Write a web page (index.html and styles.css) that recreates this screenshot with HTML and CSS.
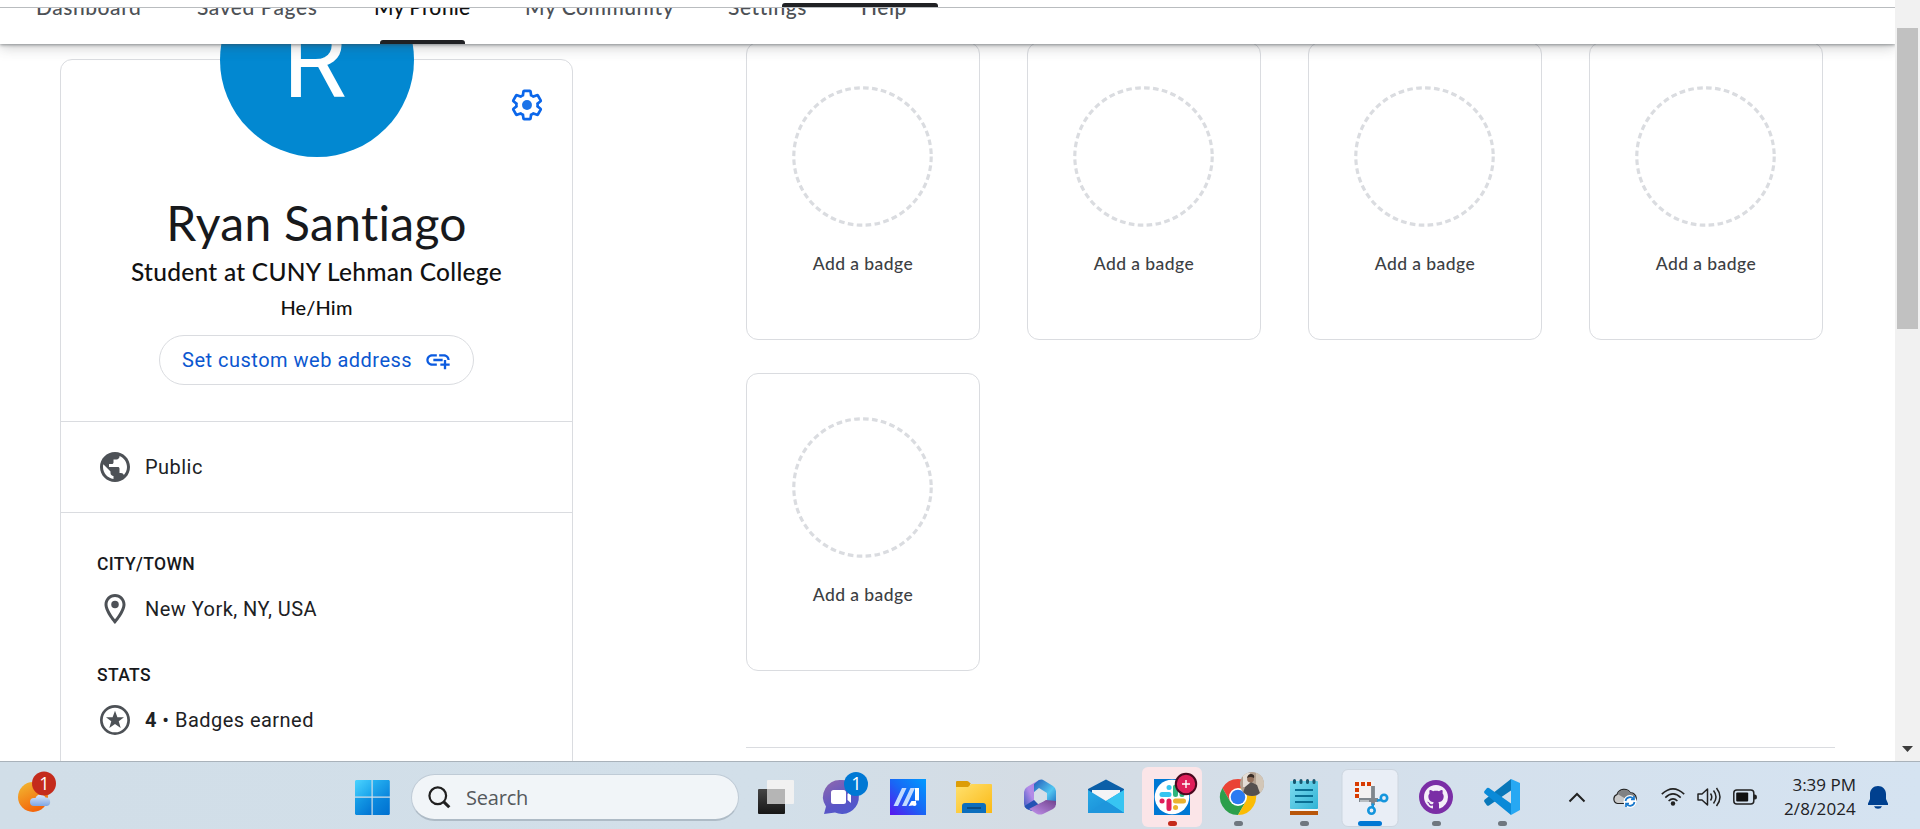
FILE: index.html
```html
<!DOCTYPE html>
<html lang="en">
<head>
<meta charset="utf-8">
<title>My Profile</title>
<link rel="stylesheet" href="styles.css">
</head>
<body>
<div class="screen">
  <div class="browser">
    <div class="page">
      <header class="header">
        <div class="topline"><span class="topmark"></span></div>
        <nav class="tabs">
          <a class="tab">Dashboard</a>
          <a class="tab">Saved Pages</a>
          <a class="tab active">My Profile</a>
          <a class="tab">My Community</a>
          <a class="tab">Settings</a>
          <a class="tab">Help</a>
        </nav>
      </header>
      <main class="main">
        <section class="profile">
          <div class="identity">
            <div class="avatar"><span>R</span></div>
            <svg class="gear" viewBox="0 0 24 24"><path fill="none" stroke="#0b66ea" stroke-width="1.9" d="M19.43 12.98c.04-.32.07-.64.07-.98 0-.34-.03-.66-.07-.98l2.11-1.65c.19-.15.24-.42.12-.64l-2-3.46c-.09-.16-.26-.25-.44-.25-.06 0-.12.01-.17.03l-2.49 1c-.52-.4-1.08-.73-1.69-.98l-.38-2.65C14.46 2.18 14.25 2 14 2h-4c-.25 0-.46.18-.49.42l-.38 2.65c-.61.25-1.17.59-1.69.98l-2.49-1c-.06-.02-.12-.03-.18-.03-.17 0-.34.09-.43.25l-2 3.46c-.13.22-.07.49.12.64l2.11 1.65c-.04.32-.07.65-.07.98 0 .33.03.66.07.98l-2.11 1.65c-.19.15-.24.42-.12.64l2 3.46c.09.16.26.25.44.25.06 0 .12-.01.17-.03l2.49-1c.52.4 1.08.73 1.69.98l.38 2.65c.03.24.24.42.49.42h4c.25 0 .46-.18.49-.42l.38-2.65c.61-.25 1.17-.59 1.69-.98l2.49 1c.06.02.12.03.18.03.17 0 .34-.09.43-.25l2-3.46c.12-.22.07-.49-.12-.64l-2.11-1.65z"/><circle cx="12" cy="12" r="3.5" fill="#1a73e8"/></svg>
            <h1 class="name">Ryan Santiago</h1>
            <p class="role">Student at CUNY Lehman College</p>
            <p class="pronouns">He/Him</p>
            <button class="address"><span>Set custom web address</span>
              <svg class="link" viewBox="0 0 24 24"><path fill="#0b5be0" d="M8 11h8v2H8zM20.1 12H22c0-2.76-2.24-5-5-5h-4v1.9h4c1.71 0 3.1 1.39 3.1 3.1zM3.9 12c0-1.71 1.39-3.1 3.1-3.1h4V7H7c-2.76 0-5 2.24-5 5s2.24 5 5 5h4v-1.9H7c-1.71 0-3.1-1.39-3.1-3.1zM19 12h-2v3h-3v2h3v3h2v-3h3v-2h-3z"/></svg>
            </button>
          </div>
          <div class="visibility row">
            <svg class="icon" viewBox="0 0 24 24"><path d="M12 2C6.48 2 2 6.48 2 12s4.48 10 10 10 10-4.48 10-10S17.52 2 12 2zm-1 17.93c-3.95-.49-7-3.85-7-7.93 0-.62.08-1.21.21-1.79L9 15v1c0 1.1.9 2 2 2v1.93zm6.9-2.54c-.26-.81-1-1.39-1.9-1.39h-1v-3c0-.55-.45-1-1-1H8v-2h2c.55 0 1-.45 1-1V7h2c1.1 0 2-.9 2-2v-.41c2.93 1.19 5 4.06 5 7.41 0 2.08-.8 3.97-2.1 5.39z"/></svg>
            <span>Public</span>
          </div>
          <div class="details">
            <h2 class="label">CITY/TOWN</h2>
            <div class="row">
              <svg class="icon" viewBox="0 0 24 24"><path d="M12 2C8.13 2 5 5.13 5 9c0 5.25 7 13 7 13s7-7.75 7-13c0-3.87-3.13-7-7-7zM7 9c0-2.76 2.24-5 5-5s5 2.24 5 5c0 2.88-2.88 7.19-5 9.88C9.92 16.21 7 11.85 7 9z"/><circle cx="12" cy="9" r="2.5"/></svg>
              <span>New York, NY, USA</span>
            </div>
            <h2 class="label stats">STATS</h2>
            <div class="row">
              <svg class="icon" viewBox="0 0 24 24"><circle cx="12" cy="12" r="9.1" fill="none" stroke="#4d5156" stroke-width="1.8"/><path d="M12 5.900l1.600 4.250h4.400l-3.500 2.750 1.300 4.400L12 14.700 8.200 17.300l1.300-4.400L6 10.150h4.400z"/></svg>
              <span><b>4</b> • Badges earned</span>
            </div>
          </div>
        </section>
        <section class="badges">
          <div class="grid">
            <div class="badge"><svg class="ring" viewBox="0 0 142 142"><circle cx="71" cy="71" r="69.200"/></svg><span>Add a badge</span></div>
            <div class="badge"><svg class="ring" viewBox="0 0 142 142"><circle cx="71" cy="71" r="69.200"/></svg><span>Add a badge</span></div>
            <div class="badge"><svg class="ring" viewBox="0 0 142 142"><circle cx="71" cy="71" r="69.200"/></svg><span>Add a badge</span></div>
            <div class="badge"><svg class="ring" viewBox="0 0 142 142"><circle cx="71" cy="71" r="69.200"/></svg><span>Add a badge</span></div>
            <div class="badge"><svg class="ring" viewBox="0 0 142 142"><circle cx="71" cy="71" r="69.200"/></svg><span>Add a badge</span></div>
          </div>
          <hr class="rule">
        </section>
      </main>
    </div>
    <div class="scrollbar"><div class="thumb"></div><svg class="down" viewBox="0 0 11 6"><path d="M0 0h11L5.5 6z" fill="#3c3c3c"/></svg></div>
  </div>

  <footer class="taskbar">
    <svg class="slot weather" viewBox="0 0 60 60">
      <defs>
        <linearGradient id="sun" x1="0" y1="0" x2=".5" y2="1"><stop offset="0" stop-color="#f1bc34"/><stop offset="1" stop-color="#f4650a"/></linearGradient>
        <linearGradient id="cloud" x1="0" y1="0" x2="0" y2="1"><stop offset="0" stop-color="#dbe9fb"/><stop offset="1" stop-color="#7fa6e4"/></linearGradient>
      </defs>
      <circle cx="33" cy="30" r="15" fill="url(#sun)"/>
      <path d="M34 39a4 4 0 0 1 0-8h1.500a5.500 5.500 0 0 1 10-.5 4.300 4.300 0 0 1 1.200 8.500z" fill="url(#cloud)"/>
      <circle cx="44" cy="16.500" r="12" fill="#c42b1c"/>
      <text x="44.500" y="22.500" class="count">1</text>
    </svg>
    <svg class="slot start" viewBox="0 0 60 60">
      <defs>
        <linearGradient id="w1" x1="0" y1="0" x2="1" y2="1"><stop offset="0" stop-color="#4cd3ff"/><stop offset="1" stop-color="#16a1ea"/></linearGradient>
        <linearGradient id="w2" x1="0" y1="0" x2="1" y2="1"><stop offset="0" stop-color="#27b4f2"/><stop offset="1" stop-color="#0a84dc"/></linearGradient>
        <linearGradient id="w3" x1="0" y1="0" x2="1" y2="1"><stop offset="0" stop-color="#18a3ea"/><stop offset="1" stop-color="#0173d2"/></linearGradient>
        <linearGradient id="w4" x1="0" y1="0" x2="1" y2="1"><stop offset="0" stop-color="#0d8de0"/><stop offset="1" stop-color="#0070d0"/></linearGradient>
      </defs>
      <path d="M14 13h15.500v16.500H13V14z" fill="url(#w1)"/><path d="M30.700 13H47l.800 1v15.500H30.700z" fill="url(#w2)"/><path d="M13 30.700h16.500V48H14l-1-1z" fill="url(#w3)"/><path d="M30.700 30.700h17.100V47l-.8 1H30.700z" fill="url(#w4)"/>
    </svg>
    <div class="search">
      <svg class="lens" viewBox="0 0 24 24"><circle cx="10.200" cy="10.200" r="8.700"/><path d="M16.500 16.500l5.700 5.700" stroke-width="3.200"/></svg>
      <span>Search</span>
    </div>
    <div class="apps">
      <svg class="slot" viewBox="0 0 60 60">
        <defs><linearGradient id="tv" x1="0" y1="0" x2="0" y2="1"><stop offset="0" stop-color="#454545"/><stop offset="1" stop-color="#161616"/></linearGradient></defs>
        <rect x="12" y="22" width="27" height="25" rx="1" fill="url(#tv)"/>
        <rect x="21" y="13" width="27" height="24" rx="1" fill="#f1f1f1"/><rect x="21" y="22" width="18" height="15" fill="#b5b5b5"/>
      </svg>
      <svg class="slot" viewBox="0 0 60 60">
        <defs><linearGradient id="chat" x1="0" y1="0" x2=".6" y2="1"><stop offset="0" stop-color="#9169ad"/><stop offset=".7" stop-color="#5a55c6"/><stop offset="1" stop-color="#5058cc"/></linearGradient></defs>
        <path d="M29 13a17 17 0 1 1-6 32.500L12 47l2-7.500A17 17 0 0 1 29 13z" fill="url(#chat)"/>
        <rect x="19" y="23" width="15" height="14" rx="2.500" fill="#fff"/><path d="M35.500 27l3.500-3v12l-3.500-3z" fill="#fff"/>
        <circle cx="44" cy="17" r="12" fill="#0078d4"/><text x="44.500" y="23" class="count">1</text>
      </svg>
      <svg class="slot" viewBox="0 0 60 60">
        <defs><linearGradient id="asus" x1="1" y1="0" x2="0" y2="1"><stop offset="0" stop-color="#009bff"/><stop offset=".5" stop-color="#1867f5"/><stop offset="1" stop-color="#5a14ee"/></linearGradient></defs>
        <rect x="12" y="12" width="36" height="36" fill="url(#asus)"/>
        <path d="M15.500 39L24 21h4.500L20 39zM24 39l8.500-18H37L28.500 39z" fill="#c3dbff"/><path d="M37 21h4v12.500h-4zM30.500 39l3-5H38v4z" fill="#fff"/><circle cx="36.500" cy="37" r="2" fill="#fff"/>
      </svg>
      <svg class="slot" viewBox="0 0 60 60">
        <defs><linearGradient id="fold" x1="0" y1="0" x2="1" y2="1"><stop offset="0" stop-color="#ffe16f"/><stop offset="1" stop-color="#fbb915"/></linearGradient></defs>
        <path d="M12 15q0-1 1-1h10q1 0 2 1l2 2h-1v5H12z" fill="#dd9d07"/>
        <path d="M12 20h12l3-3h20q1 0 1 1v28H12z" fill="url(#fold)"/>
        <path d="M18 46v-7q0-3 3-3h18q3 0 3 3v7z" fill="#0c6ebd"/><path d="M23 41h14" stroke="#0a4c84" stroke-width="2"/>
      </svg>
      <svg class="slot" viewBox="0 0 60 60">
        <defs>
          <linearGradient id="m1" x1="1" y1="0" x2="0" y2="1"><stop offset="0" stop-color="#b583e0"/><stop offset=".5" stop-color="#b28be8"/><stop offset="1" stop-color="#3456bd"/></linearGradient>
          <linearGradient id="m2" x1="0" y1="0" x2="1" y2="1"><stop offset="0" stop-color="#235ab8"/><stop offset=".6" stop-color="#52c6f1"/><stop offset="1" stop-color="#1f6cc0"/></linearGradient>
          <linearGradient id="m3" x1="0" y1="1" x2="1" y2="0"><stop offset="0" stop-color="#c495f0"/><stop offset="1" stop-color="#70418c"/></linearGradient>
        </defs>
        <path d="M29 13L17 20q-3 2-3 5v12q0 3 3 5l5 2 7-4-5-7v-8l5-6z" fill="url(#m1)"/>
        <path d="M17 42q-1.500-1-2.500-3L24 33l5 5-7 6z" fill="#2452b4"/>
        <path d="M29 13q3-1 5 .500l9 5.500q3 2 3 5v14l-9-4v-8l-8-5-5 4v-8z" fill="url(#m2)"/>
        <path d="M46 34v3q0 3-3 5l-10 5q-3 1-6 0l-8-5 17-9z" fill="url(#m3)"/>
        <circle cx="30" cy="29.500" r="6" fill="#d5dee8"/>
      </svg>
      <svg class="slot" viewBox="0 0 60 60">
        <defs><linearGradient id="mail" x1="0" y1="0" x2="1" y2="1"><stop offset="0" stop-color="#28a9e5"/><stop offset="1" stop-color="#1487d5"/></linearGradient></defs>
        <path d="M12 22l18-9.500L48 22v4H12z" fill="#0b5fa8"/><path d="M16 23h28v10L30 40 16 33z" fill="#f4f4f6"/>
        <path d="M12 23l18 11 18-11v23H12z" fill="url(#mail)"/><path d="M48 23v23L30 34z" fill="#37c5f2"/><path d="M12 46l18-12 18 12z" fill="#1e96dc"/>
      </svg>
      <svg class="slot" viewBox="0 0 60 60">
        <rect width="60" height="60" rx="6" fill="#fbe5e8"/>
        <rect x="12" y="12" width="36" height="36" fill="#0078d4"/><circle cx="30" cy="30" r="17.300" fill="#fff"/>
        <g stroke-width="5" stroke-linecap="round" fill="none">
          <path d="M20 27.500h7M27 20.500h.1" stroke="#36c5f0"/><path d="M33.500 20v7.500M40 27.500h.1" stroke="#2eb67d"/>
          <path d="M33.500 34h8M33.500 40.500h.1" stroke="#ecb22e"/><path d="M27 34v7.500M20 34h.1" stroke="#e01e5a"/>
        </g>
        <circle cx="44" cy="17" r="10.200" fill="#e01e5a" stroke="#49091f" stroke-width="2"/><path d="M40 17h8M44 13v8" stroke="#fff" stroke-width="1.400"/>
        <rect x="26" y="54" width="9" height="5" rx="2.500" fill="#c42b1c"/>
      </svg>
      <svg class="slot" viewBox="0 0 60 60">
        <path d="M14.400 21A18 18 0 0 1 45.600 21H30l-7.800 13.500z" fill="#ea4335"/>
        <path d="M14.400 21A18 18 0 0 0 30 48l7.800-13.500H22.200z" fill="#2b9f4b"/><path d="M45.600 21A18 18 0 0 1 30 48l7.800-13.500L30 21z" fill="#fbbc04"/>
        <circle cx="30" cy="30" r="9" fill="#fff"/><circle cx="30" cy="30" r="7.300" fill="#2b7bf2"/>
        <clipPath id="face"><circle cx="44" cy="17" r="12"/></clipPath>
        <g clip-path="url(#face)"><path d="M32 5h24v24H32z" fill="#b3a190"/><path d="M48 5h8v24h-8z" fill="#d2c6b7"/><path d="M35 6h7v14h-7z" fill="#e4ddd5"/><path d="M34 29l3-9 6-5 6 3 4 11z" fill="#55504e"/><circle cx="42.500" cy="12" r="3.400" fill="#94705a"/><path d="M39 11q1-4.500 4.500-4 3.500 .5 2.500 4-3.500-2-7 0z" fill="#382c26"/></g>
        <rect x="26" y="54" width="9" height="5" rx="2.500" fill="#6f777f"/>
      </svg>
      <svg class="slot" viewBox="0 0 60 60">
        <defs><linearGradient id="note" x1="0" y1="0" x2="1" y2="1"><stop offset="0" stop-color="#7fdcf0"/><stop offset="1" stop-color="#30b3d5"/></linearGradient></defs>
        <path d="M16 42h28v3H16z" fill="#f5f5f5"/><path d="M16 44h28v4H16z" fill="#b8560a"/><rect x="16" y="14" width="28" height="28" rx="1" fill="url(#note)"/>
        <path d="M21 23h18M21 29h18M21 35h18" stroke="#0a6f93" stroke-width="2"/><path d="M20.500 13.500v2M27 13.500v2M33.500 13.500v2M40 13.500v2" stroke="#17576f" stroke-width="3" stroke-linecap="round"/>
        <rect x="26" y="54" width="9" height="5" rx="2.500" fill="#6f777f"/>
      </svg>
      <svg class="slot" viewBox="0 0 60 60">
        <rect x="2" y="2.500" width="56" height="57" rx="6" fill="#e9eef6" stroke="#ccd5df"/><rect x="15" y="14" width="19" height="17" fill="#f3f1f2"/>
        <path d="M15 17h16M17 21v12" stroke="#d83b01" stroke-width="4" stroke-dasharray="4 2"/>
        <path d="M33 19v19M19 33h19" stroke="#7f868d" stroke-width="3.800"/><path d="M20 34h9" stroke="#b7bdc2" stroke-width="2"/>
        <g fill="none" stroke="#1495dd" stroke-width="2.600"><circle cx="44" cy="31" r="3.200"/><circle cx="31.500" cy="43.500" r="3.200"/><path d="M37 33.500l4.500-.5M33 36.500l-.5 4"/></g>
        <rect x="18" y="54" width="24" height="5" rx="2.500" fill="#0078d4"/>
      </svg>
      <svg class="slot" viewBox="0 0 60 60">
        <circle cx="30" cy="30" r="17" fill="#7b2ea6"/>
        <path transform="translate(18 18) scale(1.5)" fill="#f4eff8" d="M8 0C3.580 0 0 3.580 0 8c0 3.540 2.290 6.530 5.470 7.590.4.070.55-.17.55-.38 0-.19-.01-.82-.01-1.490-2.010.37-2.530-.49-2.690-.94-.09-.23-.48-.94-.82-1.130-.28-.15-.68-.52-.01-.53.63-.01 1.080.58 1.230.82.72 1.210 1.870.87 2.330.66.07-.52.28-.87.51-1.070-1.780-.2-3.640-.89-3.640-3.950 0-.87.31-1.590.82-2.150-.08-.2-.36-1.020.08-2.120 0 0 .67-.21 2.200.82.64-.18 1.320-.27 2-.27s1.360.09 2 .27c1.530-1.040 2.200-.82 2.200-.82.44 1.100.16 1.920.08 2.120.51.56.82 1.270.82 2.150 0 3.070-1.870 3.750-3.650 3.950.29.25.54.73.54 1.480 0 1.070-.01 1.930-.01 2.200 0 .21.15.46.55.38A8.010 8.010 0 0 0 16 8c0-4.420-3.580-8-8-8z"/>
        <rect x="26" y="54" width="9" height="5" rx="2.500" fill="#6f777f"/>
      </svg>
      <svg class="slot" viewBox="0 0 60 60">
        <path d="M12.500 35q-1-1 0-2.300L39 12v11.500L17 38.500q-1 .7-2 0z" fill="#0877b9"/>
        <path d="M12.500 24q-1 1 0 2.300L39 48V36.500L17 21q-1-.7-2 0z" fill="#0a8ad8"/>
        <path d="M39 12l9 4v27l-9 5z" fill="#27a8f3"/>
        <rect x="26" y="54" width="9" height="5" rx="2.500" fill="#6f777f"/>
      </svg>
    </div>
    <div class="tray">
      <svg class="chevron" viewBox="0 0 18 11"><path d="M1.500 9.500L9 2l7.500 7.500" fill="none" stroke="#222" stroke-width="2"/></svg>
      <svg class="cloudsync" viewBox="0 0 25 21"><path d="M5.500 16.500a4.700 4.700 0 0 1-.5-9A7.500 7.500 0 0 1 18.500 6a5 5 0 0 1 1 10.500z" fill="#c9c9c9" stroke="#222" stroke-width="1.200"/><path d="M5.500 7A7.500 7.500 0 0 1 18.500 6a5 5 0 0 1 4.500 4.500L14 12z" fill="#808284"/><circle cx="18" cy="14.500" r="6.500" fill="#fff"/><g fill="none" stroke="#1878cc" stroke-width="1.700"><path d="M13.500 14a4.500 4.500 0 0 1 8-2M22.500 15a4.500 4.500 0 0 1-8 2"/><path d="M22 9v3.300h-3M14 20v-3.300h3"/></g></svg>
      <svg class="wifi" viewBox="0 0 24 18"><g fill="none" stroke="#222" stroke-width="1.600"><path d="M.8 6.200Q12-4.400 23.200 6.200M4.300 9.600q7.700-7.300 15.400 0M7.600 13q4.400-4.300 8.800 0"/></g><circle cx="12" cy="15.500" r="2.200" fill="#222"/></svg>
      <svg class="speaker" viewBox="0 0 24 20"><g fill="none" stroke="#222" stroke-width="1.500"><path d="M1 7h4l5.500-5v16L5 13H1z" stroke-linejoin="round"/><path d="M13.500 6.500q2.500 3.500 0 7M16.500 3.500q5 6.500 0 13M19.500 1q7 9 0 18"/></g></svg>
      <svg class="battery" viewBox="0 0 24 16"><rect x=".8" y="1" width="20" height="14" rx="3" fill="none" stroke="#222" stroke-width="1.500"/><rect x="3.200" y="3.600" width="12" height="8.800" rx="1" fill="#111"/><path d="M21 5.500h1q2 0 2 2.500t-2 2.500h-1z" fill="#222"/></svg>
      <div class="clock"><span class="time">3:39 PM</span><span class="date">2/8/2024</span></div>
      <svg class="bell" viewBox="0 0 20 23"><path d="M10 0c4.500 0 8 3.500 8 8v5l2 4.500V19H0v-1.500L2 13V8c0-4.500 3.500-8 8-8zM6 20.200h8q-1 2.600-4 2.600t-4-2.600z" fill="#00408f"/></svg>
    </div>
  </footer>
</div>
</body>
</html>
```

FILE: styles.css
```css
* { box-sizing: border-box; }
body { margin: 0; background: #fff; font-family: Roboto, "Liberation Sans", sans-serif; color: #202124; font-variant-ligatures: none; }
h1, h2, p { margin: 0; font-weight: 400; }
svg { display: block; flex: none; }

.screen { width: 1920px; height: 829px; display: flex; flex-direction: column; overflow: hidden; }
.browser { height: 761px; display: flex; }
.page { width: 1895px; height: 761px; overflow: hidden; display: flex; flex-direction: column; }

.header { position: relative; z-index: 2; height: 44px; flex: none; background: #fff; box-shadow: 0 1px 3px rgba(60,64,67,.5), 0 3px 14px rgba(60,64,67,.28); }
.topline { height: 8px; border-bottom: 1px solid #b9bcbf; padding: 3px 0 0 782px; }
.topmark { display: block; width: 156px; height: 4px; background: #202124; border-radius: 3px 3px 0 0; }
.tabs { height: 36px; overflow: hidden; padding-left: 36px; display: grid; grid-template-columns: 161px 177px 151px 203px 133px auto; }
.tab { position: relative; height: 49px; margin-top: -13px; font: 500 21px/24px Lato, sans-serif; letter-spacing: .55px; font-variant-ligatures: none; color: #4d5156; white-space: nowrap; }
.active { color: #111; letter-spacing: .1px; }
.active::after { content: ""; position: absolute; left: 6px; top: 45px; width: 85px; height: 4px; border-radius: 3px 3px 0 0; background: #202124; }

.main { flex: 1; overflow: hidden; display: flex; align-items: flex-start; padding-left: 60px; }
.profile { width: 513px; height: 740px; margin-top: 15px; border: 1px solid #dadce0; border-radius: 12px; flex: none; }
.identity { position: relative; height: 362px; display: flex; flex-direction: column; align-items: center; border-bottom: 1px solid #dadce0; }
.avatar { width: 194px; height: 194px; margin-top: -97px; flex: none; border-radius: 50%; background: #0288d1; color: #fff; text-align: center; font-size: 104px; line-height: 194px; }
.avatar span { display: block; padding-top: 2px; margin-left: -4px; }
.gear { position: absolute; right: 28px; top: 28px; width: 34px; height: 34px; }
.name { margin-top: 38px; font: 400 48px/56px Lato, sans-serif; font-variant-ligatures: none; letter-spacing: .3px; color: #17191c; white-space: nowrap; }
.role { margin-top: 5px; font: 500 24.5px/32px Lato, sans-serif; font-variant-ligatures: none; letter-spacing: .27px; color: #111; white-space: nowrap; }
.pronouns { margin-top: 5px; font: 500 20px/28px Lato, sans-serif; letter-spacing: .15px; color: #111; }
.address { margin-top: 14px; width: 315px; height: 50px; border: 1px solid #dadce0; border-radius: 25px; background: #fff; color: #0b57d0; font: 400 20px/48px Roboto, sans-serif; letter-spacing: .5px; display: flex; align-items: center; padding: 0 0 0 22px; white-space: nowrap; flex: none; }
.address span { width: 232px; text-align: left; }
.link { width: 28px; height: 28px; margin-left: 10px; }
.icon { width: 36px; height: 36px; fill: #4d5156; }
.row { display: flex; align-items: center; gap: 12px; height: 36px; font-size: 20px; letter-spacing: .46px; white-space: nowrap; }
.visibility { height: 91px; padding-left: 36px; border-bottom: 1px solid #dadce0; }
.details { padding: 38px 0 0 36px; }
.label { font-size: 17.5px; line-height: 26px; font-weight: 500; letter-spacing: .35px; color: #17191c; }
.details .row { margin-top: 14px; }
.stats { margin-top: 35px; }

.badges { margin-left: 173px; width: 1089px; }
.grid { margin-top: -2px; display: grid; grid-template-columns: repeat(4, 234px); column-gap: 47px; row-gap: 33px; }
.badge { height: 298px; border: 1px solid #dadce0; border-radius: 12px; display: flex; flex-direction: column; align-items: center; padding-top: 43px; font: 500 17.5px/24px Lato, sans-serif; letter-spacing: .42px; color: #3c4043; }
.badge span { margin-top: 25px; }
.ring { width: 141px; height: 141px; margin-right: 1px; }
.ring circle { fill: none; stroke: #dadce0; stroke-width: 3.2; stroke-dasharray: 5.7 3.36; }
.rule { height: 1px; border: 0; background: #dadce0; margin: 76px 0 0; }

.scrollbar { width: 25px; background: #f1f1f1; padding: 28px 2px 0; }
.thumb { height: 301px; width: 21px; background: #c1c1c1; }
.down { width: 11px; height: 6px; margin: 417px 0 0 5px; }

.taskbar { height: 68px; border-top: 1px solid #a9b2ba; background: linear-gradient(90deg, #d1dee8 0%, #d2dfe9 40%, #d4dce4 54%, #d4e0ec 75%, #d5e3f1 100%); display: flex; align-items: flex-start; padding-top: 5px; font-family: "Open Sans", "Noto Sans", sans-serif; }
.slot { width: 60px; height: 60px; }
.start { margin-left: 282px; }
.search { width: 328px; height: 47px; margin: 7px 0 0 9px; border-radius: 24px; border: 1px solid #bfcbd6; border-bottom: 2px solid #aebbc6; background: #f1f5f8; display: flex; align-items: center; gap: 15px; padding-left: 16px; font-size: 20px; letter-spacing: -.2px; color: #55595c; }
.lens { width: 23px; height: 23px; fill: none; stroke: #202020; stroke-width: 2.3; }
.apps { margin-left: 7px; display: flex; gap: 6px; }
.count { font: 18px "Open Sans", sans-serif; fill: #fff; text-anchor: middle; }
.tray { height: 60px; display: flex; align-items: center; margin-left: 36px; }
.chevron { width: 18px; height: 11px; }
.cloudsync { width: 25px; height: 21px; margin-left: 26px; }
.wifi { width: 24px; height: 18px; margin-left: 24px; }
.speaker { width: 24px; height: 20px; margin-left: 12px; }
.battery { width: 24px; height: 16px; margin-left: 12px; }
.clock { width: 99px; display: flex; flex-direction: column; align-items: flex-end; font-size: 17px; line-height: 24px; color: #202124; }
.date { letter-spacing: .15px; }
.bell { width: 20px; height: 23px; margin-left: 12px; }
```
